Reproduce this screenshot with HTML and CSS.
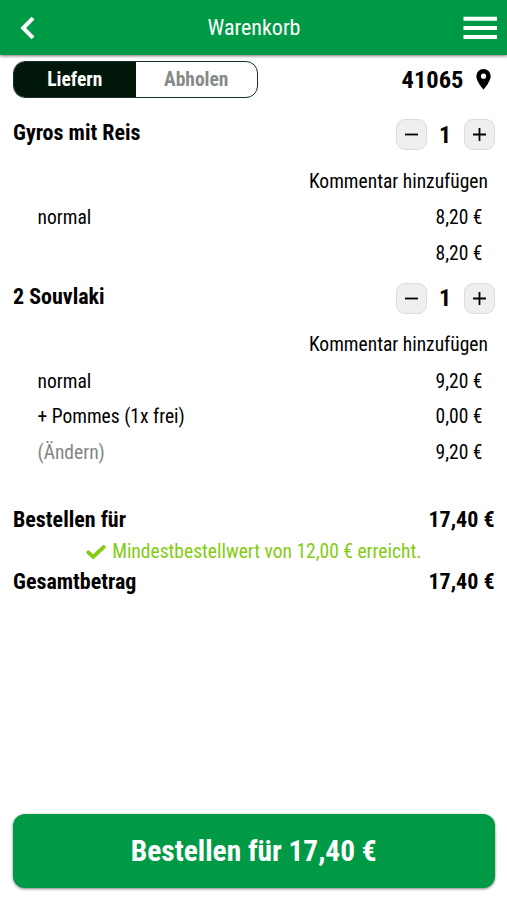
FILE: index.html
```html
<!DOCTYPE html>
<html lang="de">
<head>
<meta charset="utf-8">
<title>Warenkorb</title>
<link rel="stylesheet" href="styles.css">
</head>
<body>
<header class="bar">
  <button class="icon-btn" aria-label="Zurück"><svg width="15" height="24" viewBox="0 0 15 24"><path d="M13 2.200 3.200 12 13 21.800"/></svg></button>
  <h1>Warenkorb</h1>
  <button class="icon-btn" aria-label="Menü"><svg width="34" height="24" viewBox="0 0 34 24"><path d="M.5 2.700h33.500M.5 12h33.500M.5 21h33.500"/></svg></button>
</header>
<main>
  <div class="mode">
    <div class="tabs"><span class="tab active">Liefern</span><span class="tab">Abholen</span></div>
    <div class="zip"><span>41065</span><svg width="15" height="21" viewBox="0 0 15 21"><path fill-rule="evenodd" d="M7.500 0A7.200 7.200 0 0 0 .3 7.200C.3 12.500 7.500 20.500 7.500 20.500s7.200-8 7.200-13.300A7.200 7.200 0 0 0 7.500 0m0 4.600a2.600 2.600 0 1 1 0 5.200 2.600 2.600 0 0 1 0-5.200"/></svg></div>
  </div>
  <section class="item">
    <div class="head">
      <h2>Gyros mit Reis</h2>
      <div class="qty">
        <button aria-label="Weniger"><svg width="15" height="15" viewBox="0 0 15 15"><path d="M1 7.500h13"/></svg></button>
        <b>1</b>
        <button aria-label="Mehr"><svg width="15" height="15" viewBox="0 0 15 15"><path d="M1 7.500h13M7.500 1v13"/></svg></button>
      </div>
    </div>
    <div class="comment">Kommentar hinzufügen</div>
    <div class="line"><span>normal</span><span>8,20 €</span></div>
    <div class="line"><span></span><span>8,20 €</span></div>
  </section>
  <section class="item">
    <div class="head">
      <h2>2 Souvlaki</h2>
      <div class="qty">
        <button aria-label="Weniger"><svg width="15" height="15" viewBox="0 0 15 15"><path d="M1 7.500h13"/></svg></button>
        <b>1</b>
        <button aria-label="Mehr"><svg width="15" height="15" viewBox="0 0 15 15"><path d="M1 7.500h13M7.500 1v13"/></svg></button>
      </div>
    </div>
    <div class="comment">Kommentar hinzufügen</div>
    <div class="line"><span>normal</span><span>9,20 €</span></div>
    <div class="line"><span>+ Pommes (1x frei)</span><span>0,00 €</span></div>
    <div class="line"><span class="muted">(Ändern)</span><span>9,20 €</span></div>
  </section>
  <section class="totals">
    <div class="sum"><span>Bestellen für</span><span>17,40 €</span></div>
    <div class="minimum"><svg width="20" height="16" viewBox="0 0 20 16"><path d="M2.300 8.300 7.200 12.800 17.700 3"/></svg><span>Mindestbestellwert von 12,00 € erreicht.</span></div>
    <div class="sum"><span>Gesamtbetrag</span><span>17,40 €</span></div>
  </section>
</main>
<footer><button class="order">Bestellen für 17,40 €</button></footer>
</body>
</html>
```
FILE: styles.css
```css
* { box-sizing: border-box; }
body {
  margin: 0;
  height: 900px;
  display: flex;
  flex-direction: column;
  background: #fff;
  color: #000;
  font: 400 19.55px/24px "Roboto Condensed", Roboto, sans-serif;
  font-stretch: 75%;
}
h1, h2 { margin: 0; }
button { margin: 0; padding: 0; border: 0; color: inherit; font: inherit; }
svg { display: block; fill: none; stroke: currentColor; }

.bar {
  height: 55px;
  flex: none;
  display: grid;
  grid-template-columns: 60px 1fr 60px;
  align-items: center;
  padding: 1px 10px 0 20px;
  background: #009a46;
  color: #fff;
  box-shadow: 0 1px 3px rgba(0, 0, 0, .55);
}
.bar h1 { font-size: 22px; font-weight: 400; text-align: center; padding-right: 9px; }
.icon-btn { background: none; }
.icon-btn svg { stroke-width: 4; }
.icon-btn:last-child { justify-self: end; }

main { flex: 1; padding: 6px 12.5px 0 13px; }
.mode { display: flex; justify-content: space-between; align-items: center; height: 47px; padding-bottom: 10px; }
.tabs { display: flex; width: 245px; height: 37px; border: 1px solid #173024; border-radius: 12px; overflow: hidden; }
.tab { flex: 1; display: flex; align-items: center; justify-content: center; padding-top: 1px; color: #868a88; font-weight: 700; font-size: 19.5px; }
.tab.active { background: #00170a; color: #fff; }
.zip { display: flex; align-items: center; gap: 12px; padding-right: 4px; font-size: 24.5px; font-weight: 700; }
.zip svg { fill: currentColor; stroke: none; }

.head { display: flex; justify-content: space-between; align-items: center; height: 53px; }
.head h2 { font-size: 22px; font-weight: 700; padding-bottom: 3px; }
.qty { display: flex; align-items: center; }
.qty button { display: flex; align-items: center; justify-content: center; width: 31px; height: 31px; background: #efefef; border: 1px solid #dcdcdc; border-radius: 9px; }
.qty button svg { stroke-width: 1.8; }
.qty b { width: 37px; text-align: center; font-size: 24px; }
.comment { height: 39.5px; padding: 8.5px 6.5px 0 0; text-align: right; }
.line { display: flex; justify-content: space-between; align-items: center; height: 35.5px; padding: 0 12px 0 24.5px; }
.muted { color: #858585; }

.totals { padding-top: 35.5px; }
.sum { display: flex; justify-content: space-between; align-items: center; height: 28px; font-size: 22px; font-weight: 700; }
.minimum { display: flex; align-items: center; justify-content: center; gap: 6px; height: 34px; padding-top: 1px; color: #83cc12; }
.minimum svg { stroke-width: 3.8; stroke-linecap: round; }

footer { flex: none; padding: 0 12.5px 12px 13px; }
.order { display: block; width: 100%; height: 74px; border-radius: 12px; background: #009a46; color: #fff; font-size: 29.4px; font-weight: 700; box-shadow: 0 1px 3px rgba(0, 0, 0, .5); }
```
